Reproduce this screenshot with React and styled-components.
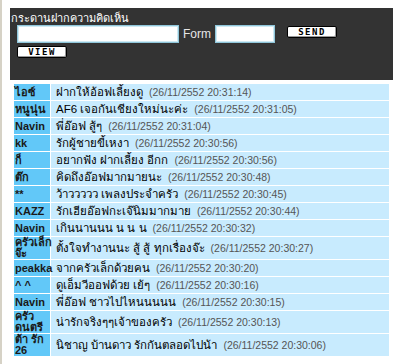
import React from 'react';
import styled, { createGlobalStyle } from 'styled-components';

const GlobalStyle = createGlobalStyle`
  body {
    margin: 0;
    background: #ffffff;
    font-family: "Liberation Sans", "DejaVu Sans", sans-serif;
  }
`;

const Frame = styled.div`
  border-left: 2px solid #d6d2c6;
  min-height: 364px;
  padding-top: 8px;
  box-sizing: border-box;
`;

const Panel = styled.div`
  margin-left: 8px;
  width: 383px;
  height: 72px;
  background: #333333;
  padding: 4px 0 0 1px;
  box-sizing: border-box;
`;

const Title = styled.div`
  color: #ffffff;
  font-size: 11px;
  line-height: 12px;
  height: 13px;
`;

const FormRow = styled.div`
  display: flex;
  align-items: flex-start;
  margin-left: 6px;
  height: 20px;
`;

const TextInput = styled.input`
  width: ${props => props.width}px;
  height: 18px;
  box-sizing: border-box;
  border: 1px solid #8fc6da;
  box-shadow: inset 0 0 0 1px #cfe9f2;
  background: #ffffff;
  padding: 0 2px;
  margin: 0;
  outline: none;
`;

const Label = styled.span`
  color: #e6e6e6;
  font-size: 12px;
  line-height: 18px;
  margin: 0 4px;
`;

const PixelButton = styled.button`
  display: block;
  width: 50px;
  height: 12px;
  min-height: 12px;
  margin: 1px 0 0 ${props => props.offset || 0}px;
  padding: 0;
  box-sizing: border-box;
  background: #ffffff;
  border: 1px solid #000000;
  border-radius: 2px;
  box-shadow: inset -1px -1px 0 #9a9a9a;
  font-family: "DejaVu Sans Mono", monospace;
  font-weight: bold;
  font-size: 9px;
  line-height: 10px;
  letter-spacing: 1.5px;
  color: #000000;
`;

const ViewRow = styled.div`
  margin-left: 6px;
`;

const Board = styled.table`
  margin: 3px 0 0 11px;
  border-collapse: separate;
  border-spacing: 1px;
  width: 377px;
  table-layout: fixed;
`;

const NameCell = styled.td`
  width: 36px;
  background: #62c8f8;
  padding: 0 0 0 1px;
  height: ${props => (props.tall ? 22 : 16)}px;
  font-weight: bold;
  font-size: 11px;
  line-height: 11px;
  color: #1a1a1a;
  white-space: nowrap;
  overflow: visible;
  vertical-align: middle;
  box-sizing: border-box;
`;

const MessageCell = styled.td`
  background: #c8ebfe;
  padding: 0 0 0 5px;
  font-size: 11.5px;
  line-height: 14px;
  color: #000000;
  white-space: nowrap;
  vertical-align: middle;
`;

const Stamp = styled.span`
  color: #555555;
  font-size: 10.5px;
  margin-left: 6px;
`;

const posts = [
  { name: ['ไอซ์'], text: 'ฝากให้อ้อฟเลี้ยงดู', time: '26/11/2552 20:31:14' },
  { name: ['หนูนุ่น'], text: 'AF6 เจอกันเชียงใหม่นะค่ะ', time: '26/11/2552 20:31:05' },
  { name: ['Navin'], text: 'พี่อ๊อฟ สู้ๆ', time: '26/11/2552 20:31:04' },
  { name: ['kk'], text: 'รักผู้ชายขี้เหงา', time: '26/11/2552 20:30:56' },
  { name: ['ก็'], text: 'อยากฟัง ฝากเลี้ยง อีกก', time: '26/11/2552 20:30:56' },
  { name: ['ต๊ก'], text: 'คิดถึงอ๊อฟมากมายนะ', time: '26/11/2552 20:30:48' },
  { name: ['**'], text: 'ว้าววววว เพลงประจำครัว', time: '26/11/2552 20:30:45' },
  { name: ['KAZZ'], text: 'รักเฮียอ๊อฟกะเจ๊นิมมากมาย', time: '26/11/2552 20:30:44' },
  { name: ['Navin'], text: 'เกินนานนน น น น', time: '26/11/2552 20:30:32' },
  { name: ['ครัวเล็ก', 'จ๊ะ'], text: 'ตั้งใจทำงานนะ สู้ สู้ ทุกเรื่องจ๊ะ', time: '26/11/2552 20:30:27' },
  { name: ['peakka'], text: 'จากครัวเล็กด้วยคน', time: '26/11/2552 20:30:20' },
  { name: ['^ ^'], text: 'ดูเอ็มวีออฟด้วย เย้ๆ', time: '26/11/2552 20:30:16' },
  { name: ['Navin'], text: 'พี่อ๊อฟ ชาวไปไหนนนนน', time: '26/11/2552 20:30:15' },
  { name: ['ครัว', 'ดนตรี'], text: 'น่ารักจริงๆๆเจ้าของครัว', time: '26/11/2552 20:30:13' },
  { name: ['ต้า รัก', '26'], text: 'นิชาญ บ้านดาว รักกันตลอดไปน้า', time: '26/11/2552 20:30:06' },
];

export default function App() {
  return (
    <Frame>
      <GlobalStyle />
      <Panel>
        <Title>กระดานฝากความคิดเห็น</Title>
        <FormRow>
          <TextInput width={162} />
          <Label>Form</Label>
          <TextInput width={60} />
          <PixelButton offset={12}>SEND</PixelButton>
        </FormRow>
        <ViewRow>
          <PixelButton>VIEW</PixelButton>
        </ViewRow>
      </Panel>
      <Board>
        <tbody>
          {posts.map((post, i) => (
            <tr key={i}>
              <NameCell tall={post.name.length > 1}>
                {post.name.map((line, j) => (
                  <div key={j}>{line}</div>
                ))}
              </NameCell>
              <MessageCell>
                {post.text}
                <Stamp>({post.time})</Stamp>
              </MessageCell>
            </tr>
          ))}
        </tbody>
      </Board>
    </Frame>
  );
}
